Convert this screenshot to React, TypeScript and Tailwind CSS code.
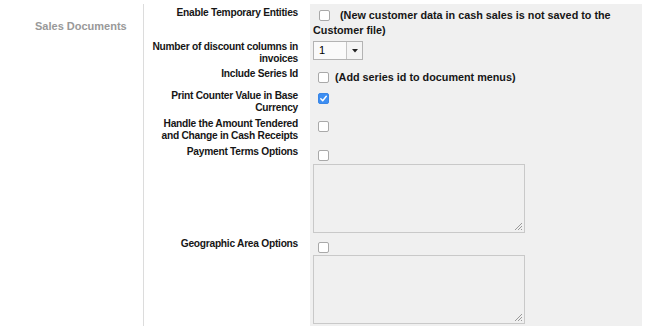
import React from "react";

const font = { fontFamily: '"Liberation Sans", Arial, Helvetica, sans-serif' };

function Box({ checked = false, className = "" }: { checked?: boolean; className?: string }) {
  return (
    <span
      className={
        "relative top-[-1px] inline-block h-[11px] w-[11px] rounded-[2px] align-middle " +
        (checked ? "bg-[#3d8ef2] border border-[#3a86e6]" : "bg-white border border-[#a9a9a9]") +
        " " +
        className
      }
    >
      {checked && (
        <svg className="absolute left-0 top-0" width="9" height="9" viewBox="0 0 9 9" fill="none">
          <path d="M1.8 4.8 L3.7 6.7 L7.3 2.2" stroke="white" strokeWidth="1.4" strokeLinecap="round" strokeLinejoin="round" />
        </svg>
      )}
    </span>
  );
}

function Area() {
  return (
    <div className="relative h-[69px] w-[212px] border border-[#c9c9c9] bg-[#f0f0f0]">
      <svg className="absolute bottom-[1px] right-[1px]" width="10" height="10" viewBox="0 0 10 10">
        <path d="M9 2 L2 9 M9 5 L5 9 M9 8 L8 9" stroke="#9a9a9a" strokeWidth="1" />
      </svg>
    </div>
  );
}

function Row({ label, pt = "pt-[5px]", children }: { label: React.ReactNode; pt?: string; children: React.ReactNode }) {
  return (
    <div className="grid grid-cols-[166px_332px]">
      <div className="pl-[3px] pr-[12px] pt-[3px] text-right text-[10.2px] font-bold leading-[12px] tracking-[-0.25px] text-[#161616]">
        {label}
      </div>
      <div className={"bg-[#f0f0f0] pl-[3px] pr-[3px] text-[10.8px] font-bold leading-[15px] text-[#161616] " + pt}>
        {children}
      </div>
    </div>
  );
}

export default function App() {
  return (
    <div className="flex min-h-[326px] bg-white pt-[4px]" style={font}>
      <div className="w-[144px] border-r border-[#dcdcdc] pl-[35px] pt-[9px]">
        <span className="text-[11px] font-bold text-[#999999]">Sales Documents</span>
      </div>
      <div className="flex flex-col">
        <Row label="Enable Temporary Entities" pt="pt-[4px]">
          <div className="h-[30px]">
            <Box className="ml-[6px] mr-[10px]" />
            (New customer data in cash sales is not saved to the Customer file)
          </div>
        </Row>
        <Row label="Number of discount columns in invoices" pt="pt-[3px]">
          <div className="flex h-[19px] w-[50px] items-stretch border border-[#b3b3b3] bg-[#fafafa] font-normal">
            <span className="flex-1 pl-[5px] text-[11px] leading-[17px] text-black">1</span>
            <span className="flex w-[16px] items-center justify-center border-l border-[#c4c4c4] bg-[#f4f4f4]">
              <svg width="6" height="4" viewBox="0 0 6 4">
                <path d="M0 0 L6 0 L3 3.5 Z" fill="#222" />
              </svg>
            </span>
          </div>
        </Row>
        <Row label="Include Series Id" pt="pt-[5px] pb-[2px]">
          <div className="h-[15px]">
            <Box className="ml-[5px] mr-[6px]" />
            (Add series id to document menus)
          </div>
        </Row>
        <Row label="Print Counter Value in Base Currency" pt="pt-[4px] pb-[9px]">
          <div className="h-[15px]">
            <Box checked className="ml-[5px]" />
          </div>
        </Row>
        <Row label="Handle the Amount Tendered and Change in Cash Receipts" pt="pt-[4px] pb-[9px]">
          <div className="h-[15px]">
            <Box className="ml-[5px]" />
          </div>
        </Row>
        <Row label="Payment Terms Options" pt="pt-[5px] pb-[2px]">
          <div className="h-[16px]">
            <Box className="ml-[5px]" />
          </div>
          <Area />
        </Row>
        <Row label="Geographic Area Options" pt="pt-[5px] pb-[3px]">
          <div className="h-[15px]">
            <Box className="ml-[5px]" />
          </div>
          <Area />
        </Row>
      </div>
    </div>
  );
}
